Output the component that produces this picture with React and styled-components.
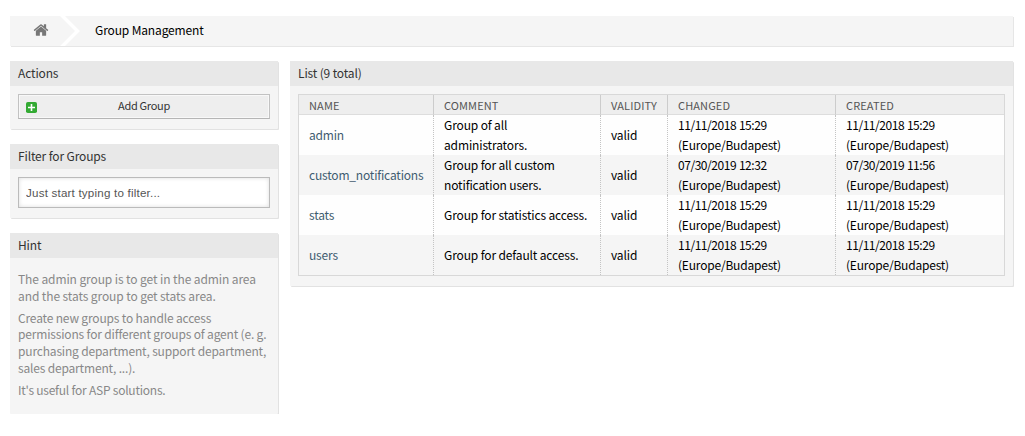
import React from 'react';
import styled, { createGlobalStyle } from 'styled-components';

const GlobalStyle = createGlobalStyle`
  *, *::before, *::after { box-sizing: border-box; }
  body {
    margin: 0;
    background: #fff;
    color: #000;
    font-family: "Noto Sans CJK SC", "Noto Sans", sans-serif;
    font-size: 12px;
    letter-spacing: -0.14px;
  }
`;

const Page = styled.div`
  padding: 16px 12px 0 10px;
`;

const Breadcrumb = styled.nav`
  display: flex;
  height: 30px;
  background: #f5f5f5;
  box-shadow: 1px 1px 0 #e6e6e6;
`;

const HomeLink = styled.a`
  display: flex;
  width: 50px;
  padding: 6px 0 0 23px;
  color: #777;
`;

const Chevron = styled.svg`
  display: block;
  width: 20px;
  height: 30px;
`;

const Crumb = styled.span`
  padding-left: 15px;
  line-height: 28px;
`;

const Columns = styled.div`
  display: flex;
  align-items: flex-start;
  gap: 12px;
  margin-top: 15px;
`;

const Sidebar = styled.aside`
  display: flex;
  flex-direction: column;
  flex: 0 0 268px;
  min-width: 0;
  gap: 15px;
`;

const Widget = styled.section`
  flex: ${(p) => (p.$grow ? '1 1 0' : 'none')};
  min-width: 0;
  height: ${(p) => p.$height}px;
  border-radius: 1px;
  background: #f5f5f5;
  box-shadow: 1px 1px 0 #e2e2e2;
`;

const WidgetTitle = styled.h2`
  height: 25px;
  margin: 0;
  padding-left: 8px;
  background: #e8e8e8;
  color: #333;
  font-size: 12px;
  font-weight: 400;
  line-height: 24px;
`;

const WidgetBody = styled.div`
  padding: 8px;
`;

const ActionButton = styled.button`
  display: grid;
  grid-template-columns: 11px 1fr 11px;
  align-items: center;
  width: 252px;
  height: 25px;
  padding: 0 7px;
  border: 1px solid #c2c2c2;
  border-bottom-color: #b5b5b5;
  background: #eee;
  box-shadow: inset 0 0 0 1px #f8f8f8;
  color: #333;
  font-family: inherit;
  font-size: 11px;
  letter-spacing: -0.3px;
  line-height: 20px;
`;

const ButtonLabel = styled.span`
  padding-bottom: 3px;
`;

const PlusIcon = styled.svg`
  display: block;
  margin-top: 2px;
`;

const FilterInput = styled.input`
  display: block;
  width: 252px;
  height: 31px;
  padding: 0 7px;
  border: 1px solid #bbb;
  border-radius: 0;
  background: #fff;
  box-shadow: inset 0 0 4px #ddd;
  font-family: "Liberation Sans", Arial, sans-serif;
  font-size: 11.6px;
  letter-spacing: 0.2px;
  &::placeholder { color: #555; }
`;

const HintText = styled.p`
  margin: 5px 0;
  color: #888;
  letter-spacing: ${(p) => p.$tracking}px;
  line-height: 16.8px;
  white-space: nowrap;
`;

const Table = styled.table`
  width: 707px;
  table-layout: fixed;
  border: 1px solid #d8d8d8;
  border-collapse: separate;
  border-spacing: 0;
`;

const HeadCell = styled.th`
  height: 20px;
  padding: 1px 0 0 10px;
  border-right: 1px solid #ccc;
  border-bottom: 1px solid #ddd;
  background: #eee;
  color: #555;
  font-size: 11px;
  font-weight: 400;
  letter-spacing: 0.12px;
  line-height: 18px;
  text-align: left;
  text-transform: uppercase;
  &:last-child { border-right: 0; }
`;

const Row = styled.tr`
  background: #fefefe;
  &:nth-child(even) { background: #f5f5f5; }
`;

const Cell = styled.td`
  height: 40px;
  padding: 0 0 0 10px;
  border-right: 1px dotted #c4c4c4;
  line-height: 20px;
  white-space: pre-line;
  vertical-align: middle;
  &:last-child { border-right: 0; }
`;

const GroupLink = styled.a`
  color: #3f5c70;
  letter-spacing: -0.19px;
`;

const Time = styled.span`
  letter-spacing: -0.46px;
  word-spacing: 0.6px;
`;

const Zone = styled.span`
  display: block;
  letter-spacing: -0.2px;
`;

const columns = [
  { label: 'Name', width: 135 },
  { label: 'Comment', width: 167 },
  { label: 'Validity', width: 67 },
  { label: 'Changed', width: 168 },
  { label: 'Created', width: 168 },
];

const groups = [
  { name: 'admin', comment: 'Group of all\nadministrators.', changed: '11/11/2018 15:29', created: '11/11/2018 15:29' },
  { name: 'custom_notifications', comment: 'Group for all custom\nnotification users.', changed: '07/30/2019 12:32', created: '07/30/2019 11:56' },
  { name: 'stats', comment: 'Group for statistics access.', changed: '11/11/2018 15:29', created: '11/11/2018 15:29' },
  { name: 'users', comment: 'Group for default access.', changed: '11/11/2018 15:29', created: '11/11/2018 15:29' },
];

function TimeCell({ value }) {
  return (
    <Cell>
      <Time>{value}</Time>
      <Zone>(Europe/Budapest)</Zone>
    </Cell>
  );
}

export default function App() {
  return (
    <>
      <GlobalStyle />
      <Page>
        <Breadcrumb>
          <HomeLink>
            <svg width="16" height="16" viewBox="0 0 1792 1792" fill="currentColor">
              <path d="M1472 992v480q0 26-19 45t-45 19h-384v-384h-256v384h-384q-26 0-45-19t-19-45v-480q0-1 .5-3t.5-3l575-474 575 474q1 2 1 6zm223-69l-62 74q-8 9-21 11h-3q-13 0-21-7l-692-577-692 577q-12 8-24 7-13-2-21-11l-62-74q-8-10-7-23.5t11-21.5l719-599q32-26 76-26t76 26l244 204v-195q0-14 9-23t23-9h192q14 0 23 9t9 23v408l219 182q10 8 11 21.5t-7 23.5z" />
            </svg>
          </HomeLink>
          <Chevron viewBox="0 0 20 30">
            <path d="M0 0H5L20 15L5 30H0L15 15Z" fill="#fff" />
          </Chevron>
          <Crumb>Group Management</Crumb>
        </Breadcrumb>
        <Columns>
          <Sidebar>
            <Widget $height={68}>
              <WidgetTitle>Actions</WidgetTitle>
              <WidgetBody>
                <ActionButton type="button">
                  <PlusIcon width="11" height="11" viewBox="0 0 11 11">
                    <rect width="11" height="11" rx="1.8" fill="#3a3" />
                    <path d="M2 5.5H9M5.5 2V9" stroke="#fff" strokeWidth="1.6" />
                  </PlusIcon>
                  <ButtonLabel>Add Group</ButtonLabel>
                </ActionButton>
              </WidgetBody>
            </Widget>
            <Widget $height={74}>
              <WidgetTitle>Filter for Groups</WidgetTitle>
              <WidgetBody>
                <FilterInput placeholder="Just start typing to filter..." />
              </WidgetBody>
            </Widget>
            <Widget $height={181}>
              <WidgetTitle>Hint</WidgetTitle>
              <WidgetBody>
                <HintText $tracking={-0.1}>The admin group is to get in the admin area<br />and the stats group to get stats area.</HintText>
                <HintText $tracking={-0.17}>Create new groups to handle access<br />permissions for different groups of agent (e. g.<br />purchasing department, support department,<br />sales department, ...).</HintText>
                <HintText $tracking={-0.23}>It's useful for ASP solutions.</HintText>
              </WidgetBody>
            </Widget>
          </Sidebar>
          <Widget as="main" $grow $height={225}>
            <WidgetTitle>List (9 total)</WidgetTitle>
            <WidgetBody>
              <Table>
                <colgroup>
                  {columns.map((c) => <col key={c.label} width={c.width} />)}
                </colgroup>
                <thead>
                  <tr>{columns.map((c) => <HeadCell key={c.label}>{c.label}</HeadCell>)}</tr>
                </thead>
                <tbody>
                  {groups.map((g) => (
                    <Row key={g.name}>
                      <Cell><GroupLink>{g.name}</GroupLink></Cell>
                      <Cell>{g.comment}</Cell>
                      <Cell>valid</Cell>
                      <TimeCell value={g.changed} />
                      <TimeCell value={g.created} />
                    </Row>
                  ))}
                </tbody>
              </Table>
            </WidgetBody>
          </Widget>
        </Columns>
      </Page>
    </>
  );
}
